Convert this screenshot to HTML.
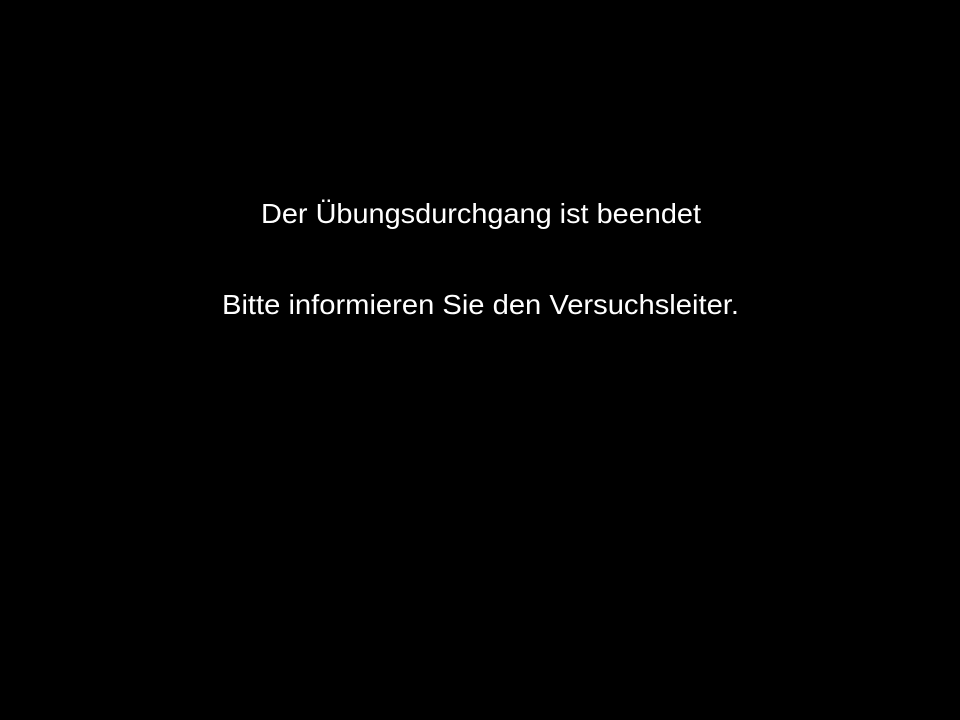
<!DOCTYPE html>
<html><head><meta charset="utf-8"><style>
html,body{margin:0;padding:0;background:#000;width:960px;height:720px;overflow:hidden}
svg{display:block}
</style></head><body>
<svg width="960" height="720" viewBox="0 0 960 720" xmlns="http://www.w3.org/2000/svg">
<rect width="960" height="720" fill="#000"/>
<text x="261" y="223" font-family="Liberation Sans, sans-serif" font-size="28" fill="#fff" textLength="440" lengthAdjust="spacingAndGlyphs">Der Übungsdurchgang ist beendet</text>
<text x="222" y="314" font-family="Liberation Sans, sans-serif" font-size="28" fill="#fff" textLength="517" lengthAdjust="spacingAndGlyphs">Bitte informieren Sie den Versuchsleiter.</text>
</svg>
</body></html>
